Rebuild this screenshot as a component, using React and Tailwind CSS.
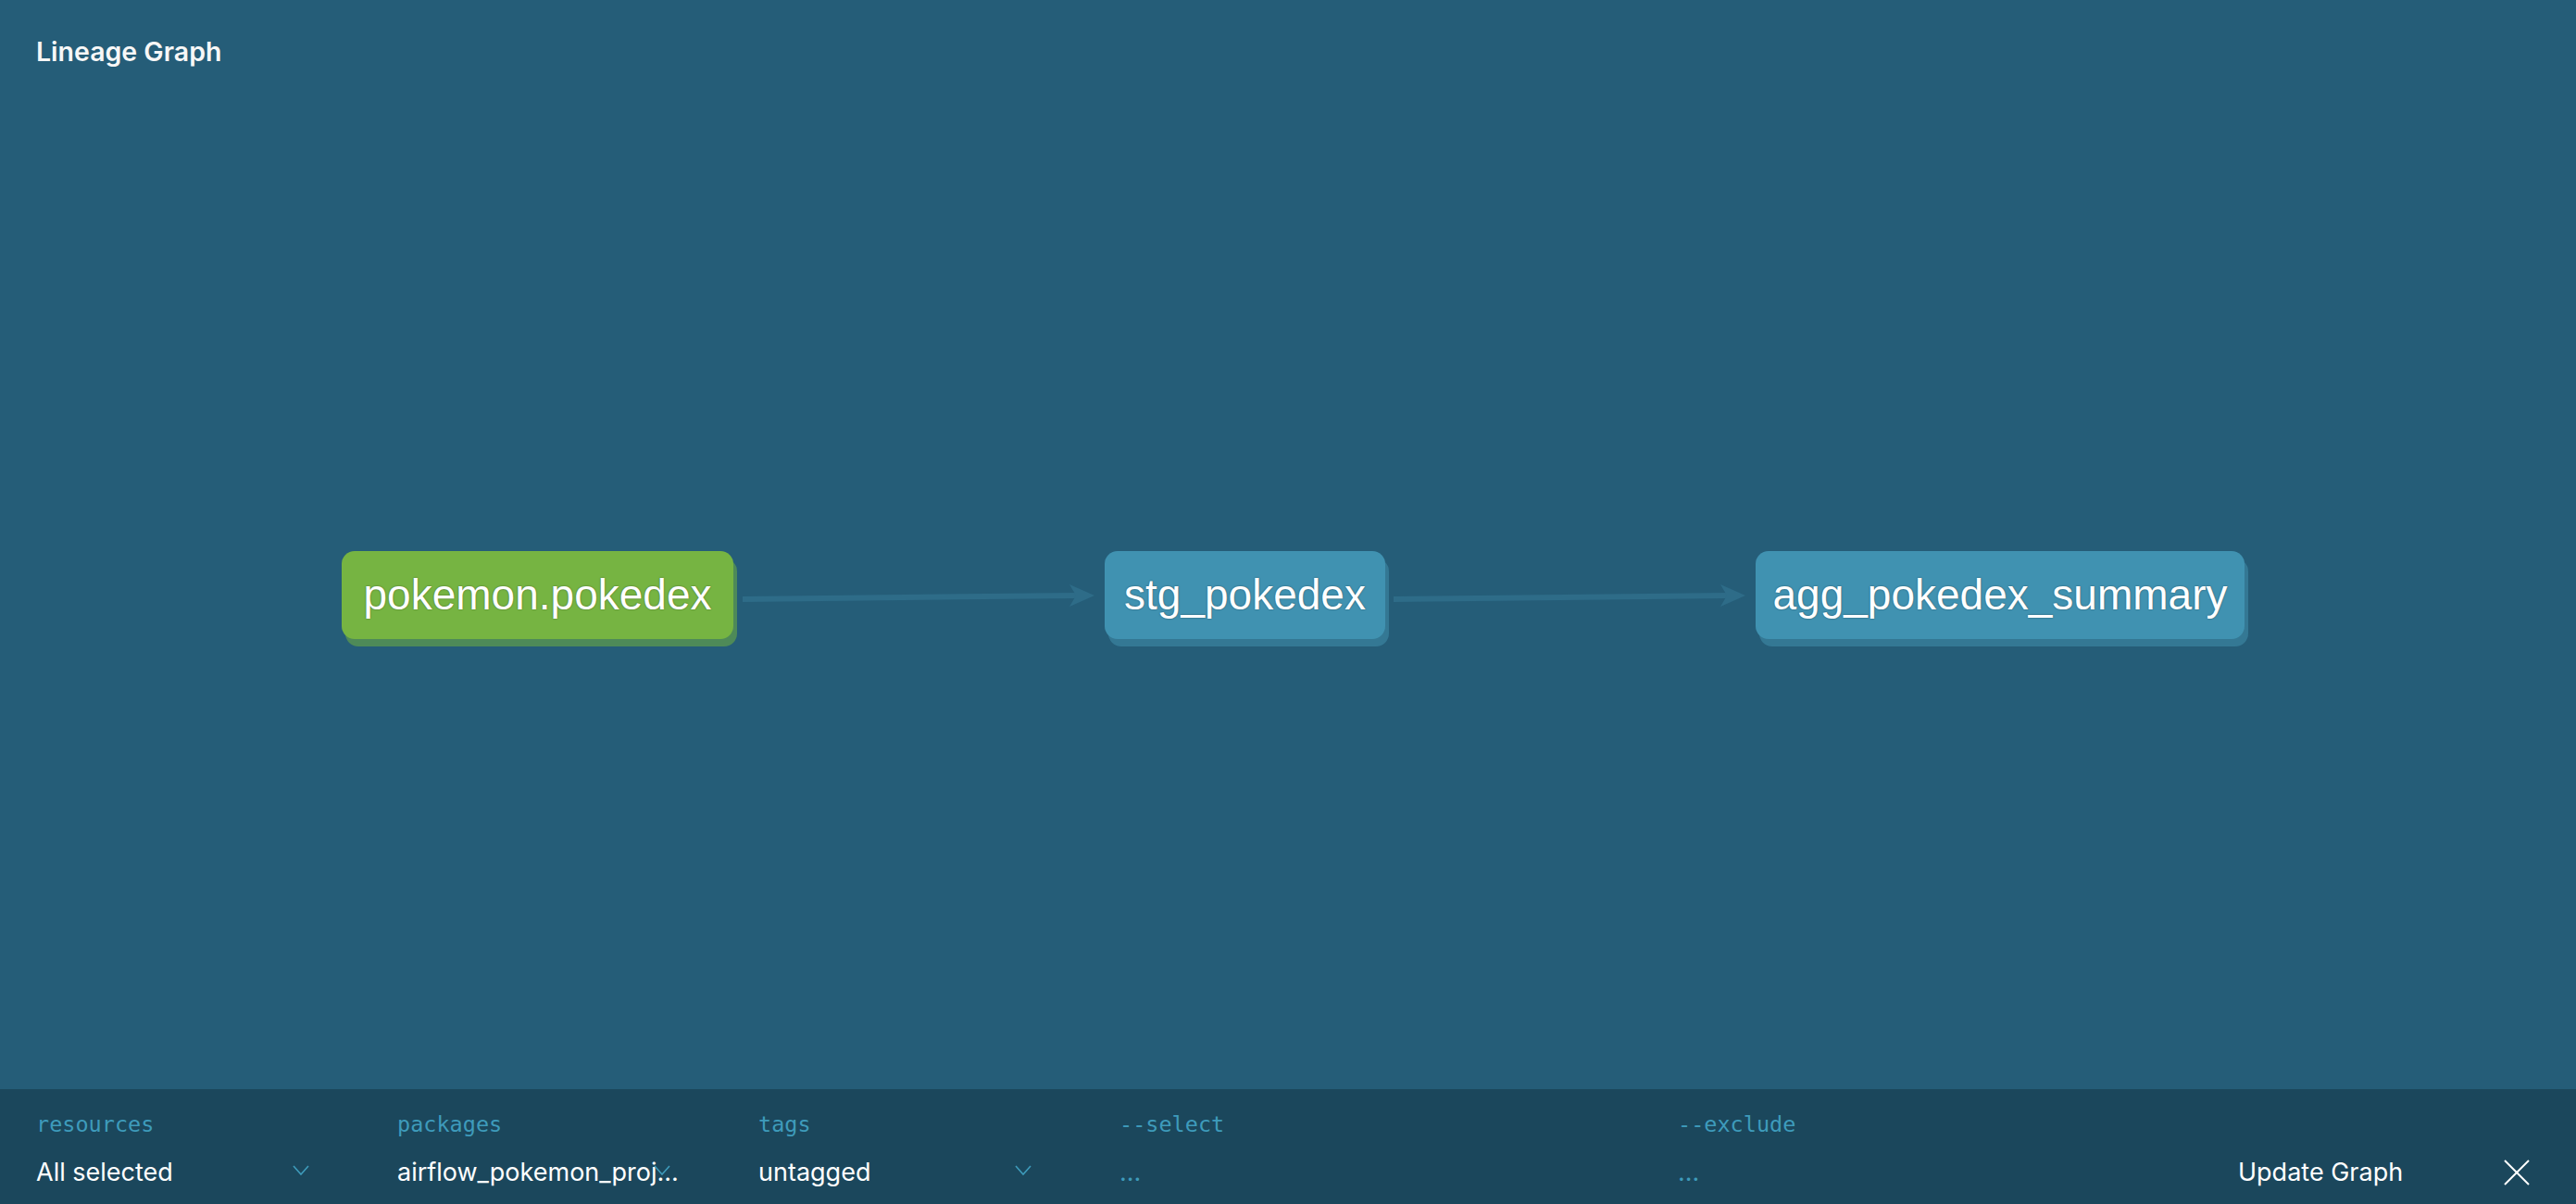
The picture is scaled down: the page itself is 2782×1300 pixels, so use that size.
const nodes = [
  { id: 'pokemon.pokedex', x: 369, w: 423, source: true },
  { id: 'stg_pokedex', x: 1193, w: 303 },
  { id: 'agg_pokedex_summary', x: 1896, w: 528 },
];

const edges = [
  { x1: 802, y1: 647, x2: 1162, y2: 643 },
  { x1: 1505, y1: 647, x2: 1865, y2: 643 },
];

function Node({ node }) {
  return (
    <div
      className={`absolute top-[595px] h-[95px] flex items-center justify-center rounded-[14px] text-white text-[46px] font-['Liberation_Sans',Arial,sans-serif] [text-shadow:0_0_2px_rgba(0,0,0,0.45)] ${
        node.source
          ? 'bg-[#76b442] shadow-[4px_8px_0_#4e8a58]'
          : 'bg-[#4092b1] shadow-[4px_8px_0_#347894]'
      }`}
      style={{ left: node.x, width: node.w }}
    >
      {node.id}
    </div>
  );
}

function Chevron() {
  return (
    <svg className="absolute right-[5px] top-[10px]" width="18" height="11" viewBox="0 0 18 11" fill="none">
      <polyline points="1,1 9,10 17,1" stroke="#3e9bbb" strokeWidth="1.6" />
    </svg>
  );
}

function SelectField({ label, value }) {
  return (
    <div className="w-[300px] mr-[90px] shrink-0 flex flex-col">
      <div className="text-[23.5px] leading-[28px] text-[#3e9bbb] font-['DejaVu_Sans_Mono',monospace]">{label}</div>
      <div className="relative mt-[20px] h-[36px]">
        <div className="whitespace-nowrap text-[27px] leading-[36px] text-white font-['Inter',sans-serif]">{value}</div>
        <Chevron />
      </div>
    </div>
  );
}

function TextField({ label }) {
  return (
    <div className="w-[513px] mr-[90px] shrink-0 flex flex-col">
      <div className="text-[23.5px] leading-[28px] text-[#3e9bbb] font-['DejaVu_Sans_Mono',monospace]">{label}</div>
      <div className="mt-[20px] text-[27px] leading-[36px] text-[#3e9bbb] font-['Inter',sans-serif]">...</div>
    </div>
  );
}

export default function App() {
  return (
    <div className="w-[2782px] h-[1300px] flex flex-col bg-[#255d78] overflow-hidden">
      {/* graph area */}
      <div className="relative h-[1176px] shrink-0 px-[39px] pt-[40px]">
        <h1 className="text-[28.5px] leading-[32px] font-semibold text-[#f7f7f7] font-['Inter',sans-serif]">Lineage Graph</h1>

        <svg className="absolute inset-0" width="2782" height="1176">
          {edges.map((e, i) => (
            <g key={i}>
              <line x1={e.x1} y1={e.y1} x2={e.x2} y2={e.y2} stroke="#2e6c88" strokeWidth="6" />
              <polygon
                points={`${e.x2 + 20},${e.y2} ${e.x2 - 7},${e.y2 - 12} ${e.x2},${e.y2} ${e.x2 - 7},${e.y2 + 12}`}
                fill="#2e6c88"
              />
            </g>
          ))}
        </svg>

        {nodes.map((n) => (
          <Node key={n.id} node={n} />
        ))}
      </div>

      {/* selector bar */}
      <div className="flex-1 bg-[#1b475c] flex items-start pl-[39px] pt-[24px]">
        <SelectField label="resources" value="All selected" />
        <SelectField label="packages" value="airflow_pokemon_proj..." />
        <SelectField label="tags" value="untagged" />
        <TextField label="--select" />
        <TextField label="--exclude" />
        <div className="mt-[48px] ml-[2px] flex items-center">
          <button className="text-[27px] leading-[36px] text-white font-['Inter',sans-serif]">Update Graph</button>
          <svg className="ml-[109px]" width="28" height="28" viewBox="0 0 28 28" fill="none">
            <line x1="1" y1="1" x2="27" y2="27" stroke="white" strokeWidth="2" />
            <line x1="27" y1="1" x2="1" y2="27" stroke="white" strokeWidth="2" />
          </svg>
        </div>
      </div>
    </div>
  );
}
